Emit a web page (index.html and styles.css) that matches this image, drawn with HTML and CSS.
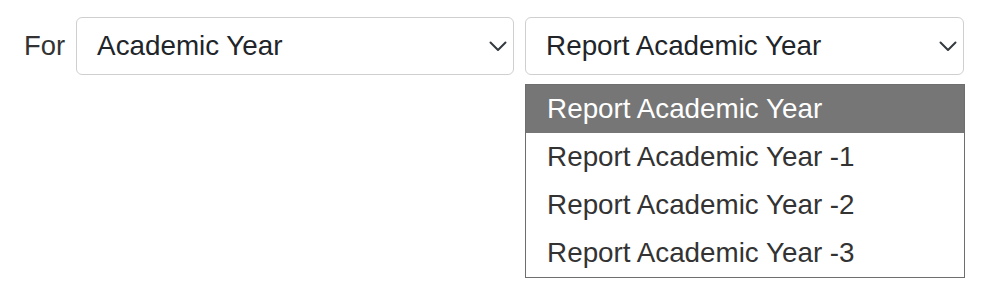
FILE: index.html
```html
<!DOCTYPE html>
<html>
<head>
<meta charset="utf-8">
<link rel="stylesheet" href="styles.css">
</head>
<body>
<div class="row">
  <span class="label">For</span>
  <div class="select">
    <span class="value">Academic Year</span>
    <svg class="chev" width="18" height="11" viewBox="0 0 18 11"><path d="M1.5 1.5 L9 9 L16.5 1.5" fill="none" stroke="#343a40" stroke-width="2" stroke-linecap="round" stroke-linejoin="round"/></svg>
  </div>
  <div class="col">
    <div class="select wide">
      <span class="value">Report Academic Year</span>
      <svg class="chev" width="18" height="11" viewBox="0 0 18 11"><path d="M1.5 1.5 L9 9 L16.5 1.5" fill="none" stroke="#343a40" stroke-width="2" stroke-linecap="round" stroke-linejoin="round"/></svg>
    </div>
    <div class="menu">
      <div class="opt active">Report Academic Year</div>
      <div class="opt">Report Academic Year -1</div>
      <div class="opt">Report Academic Year -2</div>
      <div class="opt">Report Academic Year -3</div>
    </div>
  </div>
</div>
</body>
</html>
```
FILE: styles.css
```css
html, body {
  margin: 0;
  padding: 0;
  background: #fff;
  font-family: "Liberation Sans", Arial, sans-serif;
}
.row {
  display: flex;
  align-items: flex-start;
  padding: 17px 0 0 24px;
  gap: 11px;
}
.label {
  font-size: 27.4px;
  color: #333;
  line-height: 58px;
}
.col {
  display: flex;
  flex-direction: column;
  align-items: flex-start;
}
.select {
  box-sizing: border-box;
  width: 438px;
  height: 58px;
  border: 1px solid #cfcfcf;
  border-radius: 6px;
  display: flex;
  align-items: center;
  padding: 0 0 0 20px;
  font-size: 27.8px;
  color: #212529;
}
.select.wide {
  width: 439px;
}
.value {
  flex: 1;
  line-height: 30px;
}
.chev {
  margin-right: 6px;
  margin-top: 1px;
}
.menu {
  box-sizing: border-box;
  width: 440px;
  margin: 9px 0 0 0;
  border: 1px solid #6e6e6e;
  background: #fff;
}
.opt {
  height: 48px;
  line-height: 48px;
  padding-left: 21px;
  color: #333;
  font-size: 27.8px;
}
.opt.active {
  background: #767676;
  color: #fff;
}
```
